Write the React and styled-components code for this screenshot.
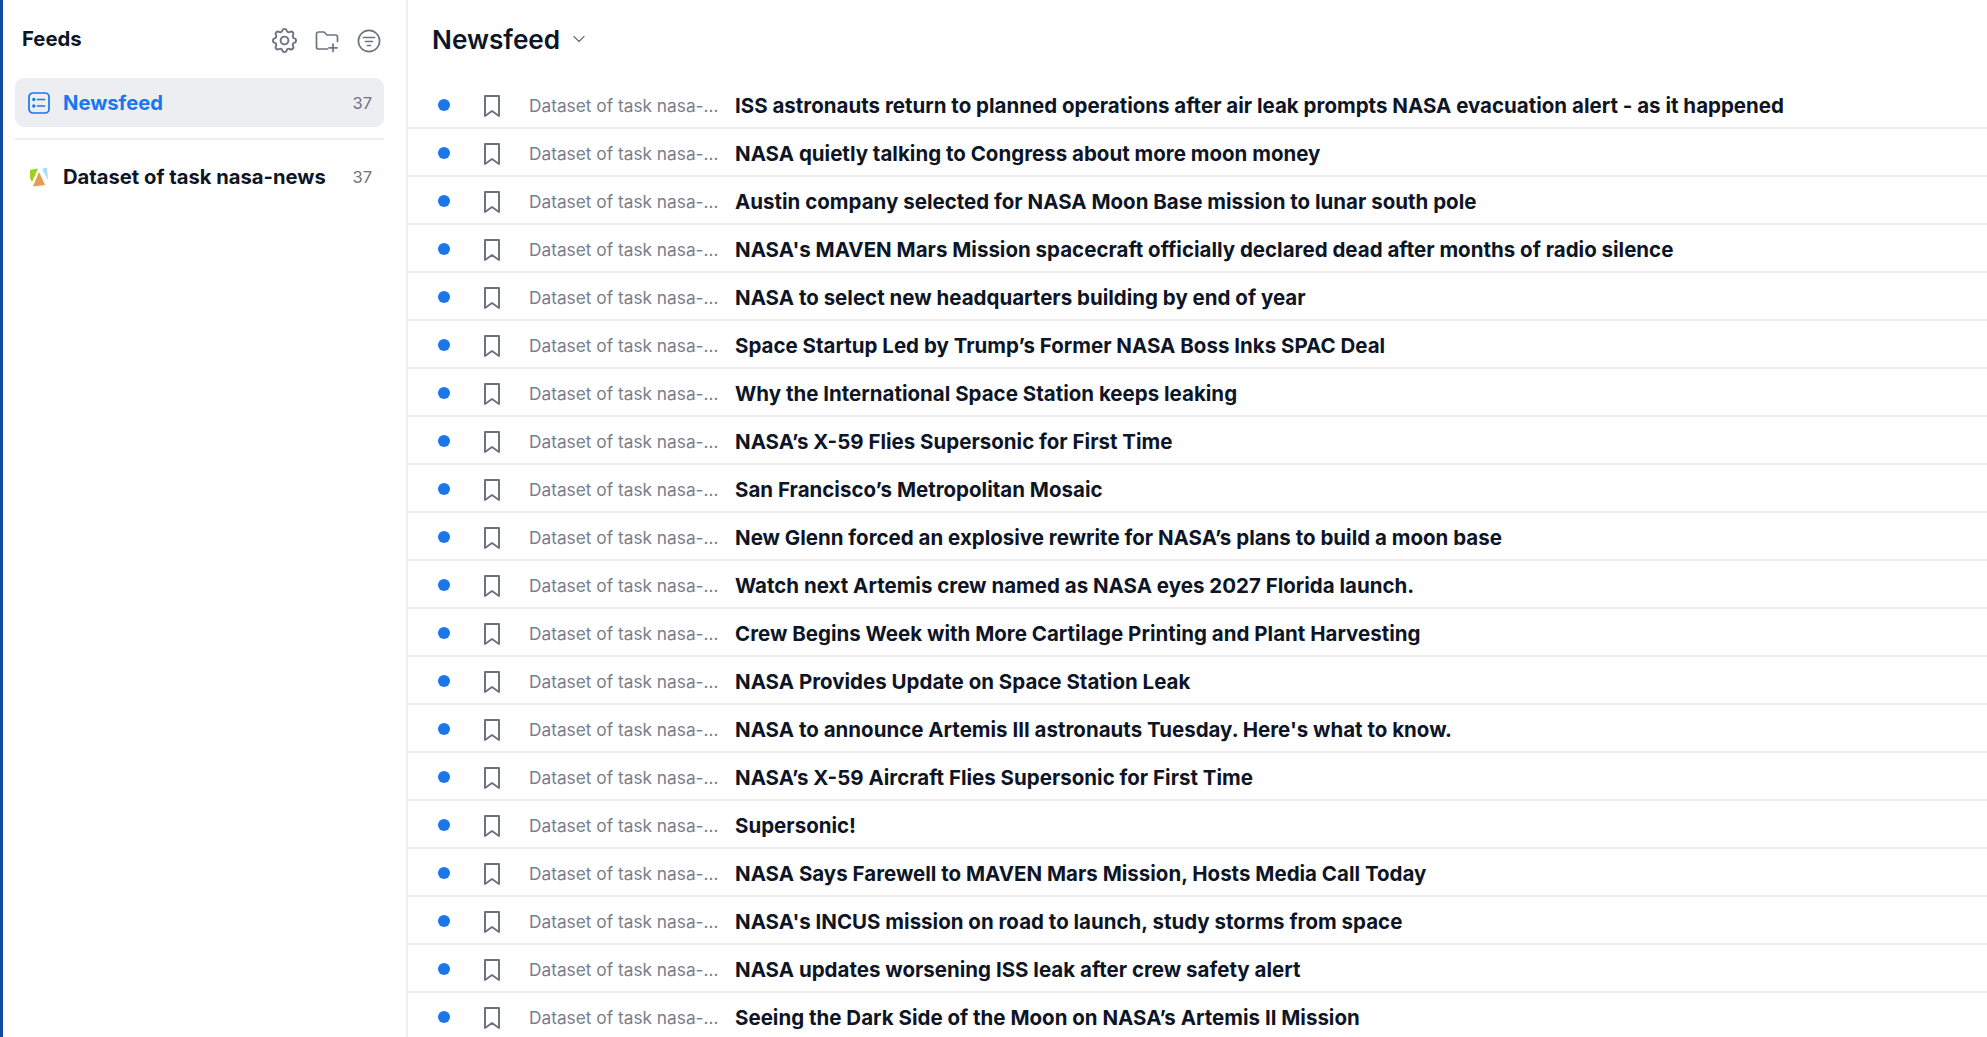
import styled, { createGlobalStyle } from 'styled-components';
import { ChevronDown } from 'lucide-react';
import { TbSettings } from 'react-icons/tb';

const GlobalStyle = createGlobalStyle`
  * {
    box-sizing: border-box;
    margin: 0;
    padding: 0;
  }

  html, body, #root {
    height: 100%;
  }

  body {
    font-family: Inter, 'Noto Sans', sans-serif;
    background: #fff;
    color: #0d1526;
    overflow: hidden;
  }
`;

const Page = styled.div`
  display: flex;
  height: 100vh;
  border-left: 3px solid #114b9f;
`;

const Sidebar = styled.aside`
  flex: 0 0 405px;
  padding: 0 22px 0 12px;
  border-right: 2px solid #eceef1;
`;

const SidebarHeader = styled.div`
  display: flex;
  align-items: center;
  justify-content: space-between;
  height: 78px;
  padding: 0 3px 2px 7px;
`;

const SidebarTitle = styled.h2`
  font-size: 20.3px;
  font-weight: 700;
`;

const Toolbar = styled.div`
  display: flex;
  align-items: center;
  gap: 18px;
  padding-top: 5px;
  color: #6e7380;
`;

const ToolIcon = styled.svg`
  display: block;
  width: ${props => props.size || 24}px;
  height: ${props => props.size || 24}px;
  fill: none;
  stroke: currentColor;
  stroke-width: 1.7;
  stroke-linecap: round;
  stroke-linejoin: round;
`;

const SettingsIcon = styled(TbSettings)`
  margin: 0 -3px;
`;

const FeedItem = styled.div`
  display: flex;
  align-items: center;
  height: 49px;
  padding: 0 12px 0 13px;
  border-radius: 9px;
  background: ${props => (props.$active ? '#edeef2' : 'transparent')};
  color: ${props => (props.$active ? '#1a76f0' : '#0d1526')};
`;

const FeedIcon = styled.span`
  display: flex;
  justify-content: center;
  flex: 0 0 22px;
  margin-right: 13px;
`;

const FeedName = styled.span`
  flex: 1;
  font-size: 20.2px;
  font-weight: 700;
  white-space: nowrap;
`;

const FeedCount = styled.span`
  font-size: 16.5px;
  color: #6e7380;
`;

const Divider = styled.hr`
  border: 0;
  border-top: 2px solid #eceef1;
  margin: 11px 0 12px;
`;

const Main = styled.main`
  flex: 1;
  min-width: 0;
  overflow: hidden;
`;

const MainHeader = styled.header`
  display: flex;
  align-items: center;
  gap: 9px;
  height: 81px;
  padding: 0 0 3px 24px;
  color: #6e7380;
`;

const MainTitle = styled.h1`
  font-size: 26.2px;
  font-weight: 600;
  color: #0d1526;
`;

const Row = styled.div`
  display: flex;
  align-items: center;
  height: 48px;
  padding: 2px 0 0 30px;
  border-bottom: 2px solid #eceef1;
`;

const UnreadDot = styled.span`
  flex: 0 0 12px;
  height: 12px;
  border-radius: 50%;
  background: #1a76f0;
  margin-right: 34px;
`;

const Bookmark = styled.svg`
  flex: 0 0 18px;
  width: 18px;
  height: 22px;
  margin: 2px 27px 0 -1px;
  fill: none;
  stroke: #6e7380;
  stroke-width: 2;
  stroke-linejoin: round;
`;

const Source = styled.span`
  flex: 0 0 190px;
  margin: 0 16px 0 1px;
  font-size: 17.3px;
  color: #797e8a;
  white-space: nowrap;
  overflow: hidden;
  text-overflow: ellipsis;
`;

const Headline = styled.span`
  font-size: 20.5px;
  font-weight: 700;
  white-space: nowrap;
`;

const headlines = [
  'ISS astronauts return to planned operations after air leak prompts NASA evacuation alert - as it happened',
  'NASA quietly talking to Congress about more moon money',
  'Austin company selected for NASA Moon Base mission to lunar south pole',
  "NASA's MAVEN Mars Mission spacecraft officially declared dead after months of radio silence",
  'NASA to select new headquarters building by end of year',
  'Space Startup Led by Trump’s Former NASA Boss Inks SPAC Deal',
  'Why the International Space Station keeps leaking',
  'NASA’s X-59 Flies Supersonic for First Time',
  'San Francisco’s Metropolitan Mosaic',
  'New Glenn forced an explosive rewrite for NASA’s plans to build a moon base',
  'Watch next Artemis crew named as NASA eyes 2027 Florida launch.',
  'Crew Begins Week with More Cartilage Printing and Plant Harvesting',
  'NASA Provides Update on Space Station Leak',
  "NASA to announce Artemis III astronauts Tuesday. Here's what to know.",
  'NASA’s X-59 Aircraft Flies Supersonic for First Time',
  'Supersonic!',
  'NASA Says Farewell to MAVEN Mars Mission, Hosts Media Call Today',
  "NASA's INCUS mission on road to launch, study storms from space",
  'NASA updates worsening ISS leak after crew safety alert',
  'Seeing the Dark Side of the Moon on NASA’s Artemis II Mission',
];

const FolderPlusIcon = () => (
  <ToolIcon viewBox="0 0 24 24">
    <path d="M12.500 20H3.500a2 2 0 0 1-2-2V5a2 2 0 0 1 2-2h5.500l3 3h8.500a2 2 0 0 1 2 2v4.500" />
    <path d="M18 15v7.500M14 18.800h8" />
  </ToolIcon>
);

const FilterCircleIcon = () => (
  <ToolIcon viewBox="0 0 24 24">
    <circle cx="12" cy="12" r="10.600" />
    <path d="M6.500 8.500h11M8.500 12.500h7M10.500 16.500h3" />
  </ToolIcon>
);

const NewsfeedIcon = () => (
  <ToolIcon size={22} viewBox="0 0 22 22">
    <rect x="1" y="1" width="20" height="20" rx="4" />
    <path d="M9.500 7.500h7M9.500 14h7" />
    <circle cx="5.800" cy="7.500" r="0.800" />
    <circle cx="5.800" cy="14" r="0.800" />
  </ToolIcon>
);

const DatasetLogo = () => (
  <svg width="20" height="20" viewBox="0 0 20 20">
    <polygon points="1,3 9,1.500 3,15 1,11" fill="#9bd21c" />
    <polygon points="13,2 18,0.500 19,13" fill="#a8dcf7" />
    <polygon points="10,5 16,18 4,19.500" fill="#e59a55" />
  </svg>
);

export default function App() {
  return (
    <>
      <GlobalStyle />
      <Page>
        <Sidebar>
          <SidebarHeader>
            <SidebarTitle>Feeds</SidebarTitle>
            <Toolbar>
              <SettingsIcon size={31} strokeWidth={1.5} />
              <FolderPlusIcon />
              <FilterCircleIcon />
            </Toolbar>
          </SidebarHeader>
          <FeedItem $active>
            <FeedIcon><NewsfeedIcon /></FeedIcon>
            <FeedName>Newsfeed</FeedName>
            <FeedCount>37</FeedCount>
          </FeedItem>
          <Divider />
          <FeedItem>
            <FeedIcon><DatasetLogo /></FeedIcon>
            <FeedName>Dataset of task nasa-news</FeedName>
            <FeedCount>37</FeedCount>
          </FeedItem>
        </Sidebar>
        <Main>
          <MainHeader>
            <MainTitle>Newsfeed</MainTitle>
            <ChevronDown size={20} strokeWidth={1.5} />
          </MainHeader>
          {headlines.map(title => (
            <Row key={title}>
              <UnreadDot />
              <Bookmark viewBox="0 0 18 22">
                <path d="M2 1h14v20l-7-5-7 5z" />
              </Bookmark>
              <Source>Dataset of task nasa-news</Source>
              <Headline>{title}</Headline>
            </Row>
          ))}
        </Main>
      </Page>
    </>
  );
}
